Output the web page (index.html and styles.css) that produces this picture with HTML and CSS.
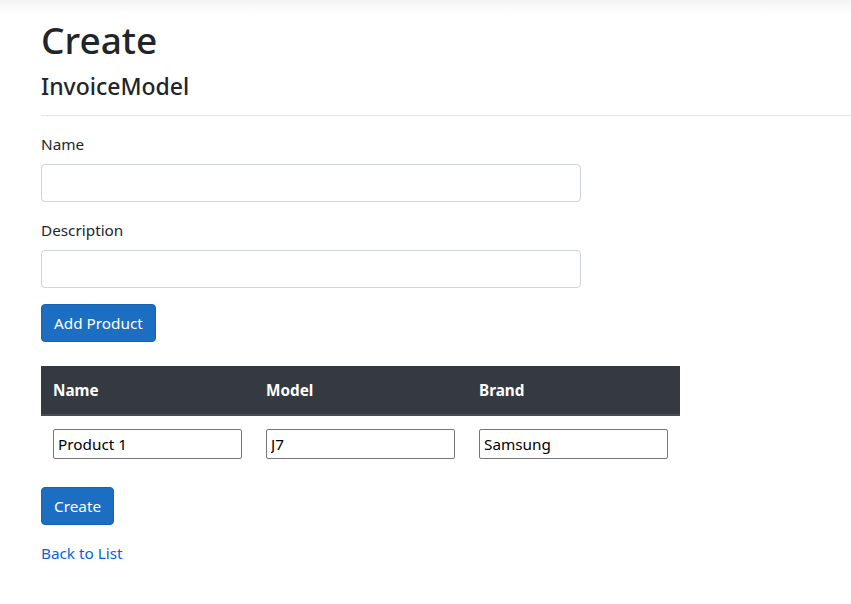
FILE: index.html
```html
<!DOCTYPE html>
<html>
<head>
<meta charset="utf-8">
<link rel="stylesheet" href="styles.css">
</head>
<body>
<div class="topshade"></div>
<main class="page">
  <h1 class="title">Create</h1>
  <h4 class="subtitle">InvoiceModel</h4>
  <hr class="rule">
  <form class="form">
    <div class="group">
      <label class="label">Name</label>
      <input class="control" type="text">
    </div>
    <div class="group">
      <label class="label">Description</label>
      <input class="control" type="text">
    </div>
    <div class="group">
      <button type="button" class="btn">Add Product</button>
    </div>
    <table class="table">
      <thead>
        <tr><th>Name</th><th>Model</th><th>Brand</th></tr>
      </thead>
      <tbody>
        <tr>
          <td><input class="cell-input" type="text" value="Product 1"></td>
          <td><input class="cell-input" type="text" value="J7"></td>
          <td><input class="cell-input" type="text" value="Samsung"></td>
        </tr>
      </tbody>
    </table>
    <div class="group">
      <button type="button" class="btn">Create</button>
    </div>
  </form>
  <div class="back"><a href="#" class="link">Back to List</a></div>
</main>
</body>
</html>
```
FILE: styles.css
```css
html, body {
  margin: 0;
  padding: 0;
  background: #fff;
}
body {
  font-family: "Noto Sans", "Open Sans", sans-serif;
  font-size: 15.3px;
  line-height: 24px;
  color: #212529;
}
.topshade {
  height: 14px;
  background: linear-gradient(#f4f4f4, #ffffff);
}
.page {
  padding-left: 41px;
}
.title {
  margin: 2px 0 0;
  font-size: 37px;
  font-weight: 500;
  line-height: 48px;
}
.subtitle {
  margin: 8px 0 0;
  font-size: 23px;
  font-weight: 500;
  line-height: 29px;
}
.rule {
  margin: 14px 0 0;
  border: 0;
  border-top: 1px solid #e5e5e5;
}
.form {
  padding-top: 16px;
}
.group {
  margin-bottom: 16px;
}
.label {
  display: block;
  margin-bottom: 8px;
}
.control {
  display: block;
  box-sizing: border-box;
  width: 540px;
  height: 38px;
  padding: 6px 12px;
  font: inherit;
  border: 1px solid #ced4da;
  border-radius: 4px;
}
.btn {
  box-sizing: border-box;
  height: 38px;
  padding: 6px 12px;
  font: inherit;
  color: #fff;
  background: #1b6ec2;
  border: 1px solid #1861ac;
  border-radius: 4px;
}
.table {
  width: 639px;
  border-collapse: collapse;
  margin-top: 24px;
  margin-bottom: 16px;
  table-layout: fixed;
}
.table th {
  text-align: left;
  padding: 12px;
  height: 24px;
  color: #fff;
  background: #343a40;
  border-bottom: 2px solid #454d55;
  font-weight: 700;
}
.table td {
  padding: 13px 12px 12px;
  vertical-align: top;
}
.cell-input {
  box-sizing: border-box;
  width: 189px;
  height: 30px;
  padding: 1px 4px;
  font: inherit;
  color: #000;
  border: 1px solid #767676;
  border-radius: 2px;
}
.back {
  margin-top: 0;
}
.link {
  color: #0366d6;
  text-decoration: none;
}
```
